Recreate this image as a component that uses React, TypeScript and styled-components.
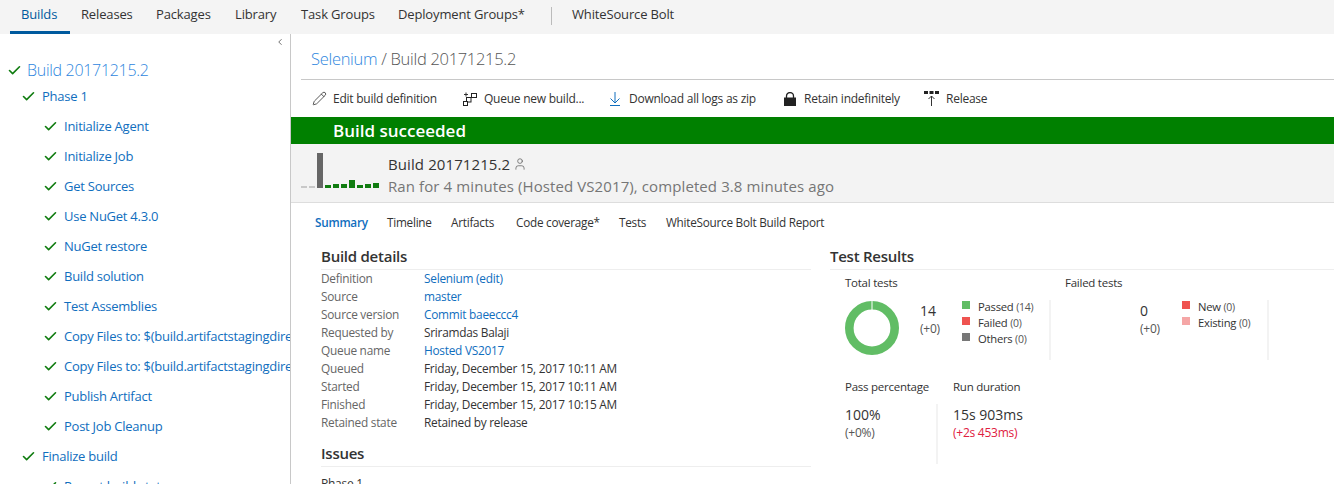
import React from "react";
import styled, { createGlobalStyle } from "styled-components";
import { Pencil, User, Check, ChevronLeft } from "lucide-react";

const Global = createGlobalStyle`
  html, body { margin: 0; padding: 0; background: #fff; height: 484px; overflow: hidden; }
  body { font-family: "Open Sans", "Noto Sans", "Liberation Sans", sans-serif; font-size: 12px; color: #333; letter-spacing: -0.25px; }
  #root { height: 484px; overflow: hidden; }
`;

const Page = styled.div`display: flex; flex-direction: column; width: 1334px; height: 484px; overflow: hidden;`;
const TopBar = styled.nav`display: flex; align-items: stretch; height: 34px; flex: none; background: #f4f4f4; padding-left: 10px; font-size: 13px; letter-spacing: -0.15px;`;
const TopTab = styled.div<{ $w: number; $active?: boolean; $flush?: boolean }>`
  width: ${p => p.$w}px; box-sizing: border-box; padding-left: ${p => (p.$flush ? 0 : 11)}px; line-height: 29px; white-space: nowrap;
  color: ${p => (p.$active ? "#005a9e" : "#333")};
  border-bottom: 3px solid ${p => (p.$active ? "#005a9e" : "transparent")};
`;
const TopSep = styled.div`width: 1px; height: 18px; margin: 7px 20px 0 0; background: #bbb;`;
const Body = styled.div`display: flex; flex: 1; min-height: 0;`;
const Side = styled.aside`width: 291px; flex: none; box-sizing: border-box; border-right: 1px solid #c8c8c8; position: relative; overflow: hidden; padding-top: 23px;`;
const Collapse = styled.div`position: absolute; top: 3px; right: 5px; color: #555; display: flex;`;
const Row = styled.div<{ $level: number }>`
  display: flex; align-items: center; white-space: nowrap; overflow: hidden; height: 30px; box-sizing: border-box;
  padding-left: ${p => [7, 21, 43][p.$level]}px; color: #106ebe; font-size: 13px;
`;
const TitleRow = styled(Row)`font-size: 16px; height: 28px; color: #2e86de; font-weight: 300; letter-spacing: -0.3px; padding-bottom: 2px;`;
const PhaseRow = styled(Row)`height: 22px; margin-bottom: 4px;`;
const Tick = styled(Check)<{ $gap: number }>`flex: none; margin-right: ${p => p.$gap}px; color: #107c10;`;
const Main = styled.main`flex: 1; min-width: 0; display: flex; flex-direction: column; overflow: hidden;`;
const Crumb = styled.div`margin: 0 0 0 10px; height: 46px; box-sizing: border-box; padding: 13px 0 0 10px; border-bottom: 1px solid #c8c8c8; font-size: 16.5px; line-height: 24px; color: #555; font-weight: 300; letter-spacing: -0.3px;`;
const CrumbLink = styled.span`color: #2e86de;`;
const Tools = styled.div`display: flex; height: 37px; align-items: center; padding-left: 21px; font-size: 12px; flex: none;`;
const Tool = styled.div<{ $w: number; $gap?: number }>`width: ${p => p.$w}px; display: flex; align-items: center; gap: ${p => p.$gap ?? 7}px; white-space: nowrap; flex: none;`;
const Banner = styled.div`height: 27px; line-height: 28px; flex: none; background: #008000; color: #fff; font-weight: 600; font-size: 17px; letter-spacing: 0; padding-left: 42px;`;
const Summary = styled.div`height: 59px; flex: none; display: flex; background: #f3f3f3; border-bottom: 1px solid #ddd; box-sizing: border-box; padding-left: 10px;`;
const Spark = styled.div`display: flex; align-items: flex-end; gap: 2px; width: 87px; height: 44px; flex: none;`;
const Bar = styled.div<{ $h: number; $c: string }>`width: 6px; height: ${p => p.$h}px; background: ${p => p.$c};`;
const SumText = styled.div`font-size: 15px; line-height: 22px; padding-top: 9px; white-space: nowrap; letter-spacing: 0.1px;`;
const SumTitle = styled.div`color: #333; display: flex; align-items: center; gap: 3px;`;
const SumSub = styled.div`color: #767676;`;
const SubTabs = styled.div`display: flex; height: 38px; align-items: center; padding-left: 24px; font-size: 11.75px; flex: none;`;
const SubTab = styled.div<{ $w: number; $active?: boolean }>`width: ${p => p.$w}px; flex: none; white-space: nowrap; color: ${p => (p.$active ? "#106ebe" : "#333")}; font-weight: ${p => (p.$active ? 600 : 400)};`;
const Columns = styled.div`display: flex; flex: 1; padding-left: 30px; min-height: 0;`;
const Left = styled.section`width: 490px; margin-right: 19px; flex: none;`;
const Right = styled.section`flex: 1; min-width: 0;`;
const Heading = styled.h2`margin: 0; font-size: 15px; line-height: 22px; font-weight: 600; color: #333; border-bottom: 1px solid #eee; box-sizing: border-box; padding-top: 4px; height: 29px;`;
const IssuesHeading = styled(Heading)`margin-top: 11px; height: 25px; padding-top: 0;`;
const DetailGrid = styled.dl`display: grid; grid-template-columns: 103px 1fr; grid-auto-rows: 18px; margin: -1px 0 0; line-height: 18px; font-size: 11.85px;`;
const Term = styled.dt`color: #666;`;
const Def = styled.dd<{ $link?: boolean }>`margin: 0; color: ${p => (p.$link ? "#106ebe" : "#333")};`;
const PhaseLine = styled.div`margin-top: 8px; font-size: 12px; line-height: 18px;`;
const Stats = styled.div`display: flex; padding-left: 15px;`;
const StatTitle = styled.div`font-size: 11.5px; line-height: 18px; height: 26px; margin-top: 4px; color: #333;`;
const Metric = styled.div<{ $w: number; $after?: number }>`
  width: ${p => p.$w}px; margin-right: ${p => p.$after ?? 0}px; flex: none; box-sizing: border-box; white-space: nowrap;
`;
const MetricBody = styled.div<{ $indent?: number }>`
  display: flex; height: 60px; padding-left: ${p => p.$indent ?? 0}px; box-sizing: border-box;
  border-right: 2px solid #f3f3f3;
`;
const Donut = styled.svg`flex: none; margin-top: 1px;`;
const Count = styled.div<{ $ml: number }>`width: 42px; margin-left: ${p => p.$ml}px; flex: none; color: #333;`;
const Big = styled.div`font-size: 14px; line-height: 20px; font-weight: 500; padding-top: 1px; letter-spacing: 0;`;
const Small = styled.div<{ $red?: boolean }>`font-size: 12px; line-height: 16px; color: ${p => (p.$red ? "#e02040" : "#555")};`;
const Legend = styled.div`font-size: 11.25px; display: flex; flex-direction: column; margin-top: -2px;`;
const LegendRow = styled.div`display: flex; align-items: center; height: 16px; gap: 8px; white-space: nowrap; color: #333;`;
const Swatch = styled.div<{ $c: string }>`width: 8px; height: 8px; margin-top: -3px; background: ${p => p.$c};`;
const Paren = styled.span`font-size: 10.5px; color: #555;`;
const Lower = styled(Stats)`margin-top: 18px;`;
const LowerTitle = styled(StatTitle)`margin-top: 0;`;
const LowerBody = styled.div<{ $sep?: boolean }>`height: 60px; box-sizing: border-box; border-right: ${p => (p.$sep ? "2px solid #f3f3f3" : "none")};`;

const steps = ["Initialize Agent", "Initialize Job", "Get Sources", "Use NuGet 4.3.0", "NuGet restore", "Build solution", "Test Assemblies", "Copy Files to: $(build.artifactstagingdirectory)", "Copy Files to: $(build.artifactstagingdirectory)", "Publish Artifact", "Post Job Cleanup"];
const tabs: [string, number][] = [["Builds", 60], ["Releases", 75], ["Packages", 79], ["Library", 66], ["Task Groups", 97], ["Deployment Groups*", 164]];
const subTabs: [string, number][] = [["Summary", 72], ["Timeline", 64], ["Artifacts", 65], ["Code coverage*", 103], ["Tests", 47], ["WhiteSource Bolt Build Report", 200]];
const bars: [number, string][] = [[2, "#c8c8c8"], [2, "#c8c8c8"], [35, "#666"], [3, "#107c10"], [4, "#107c10"], [4, "#107c10"], [8, "#107c10"], [3, "#107c10"], [4, "#107c10"], [5, "#107c10"]];
const details: [string, string, boolean][] = [
  ["Definition", "Selenium (edit)", true], ["Source", "master", true], ["Source version", "Commit baeeccc4", true],
  ["Requested by", "Sriramdas Balaji", false], ["Queue name", "Hosted VS2017", true],
  ["Queued", "Friday, December 15, 2017 10:11 AM", false], ["Started", "Friday, December 15, 2017 10:11 AM", false],
  ["Finished", "Friday, December 15, 2017 10:15 AM", false], ["Retained state", "Retained by release", false],
];

const QueueIcon = () => (
  <svg width="14" height="14" viewBox="0 0 14 14" fill="none" stroke="#222" strokeWidth="1">
    <rect x="3.5" y="5.5" width="4.5" height="4.5" />
    <rect x="0.5" y="9.5" width="4" height="4" fill="#fff" />
    <rect x="8.5" y="1.5" width="5" height="4" />
    <path d="M1 2.5h4M3 0.500v4" stroke="#333" />
  </svg>
);
const DownloadIcon = () => (
  <svg width="14" height="14" viewBox="0 0 14 14" fill="none" stroke="#106ebe" strokeWidth="1">
    <path d="M7 0v11M2.500 6.500L7 11l4.500-4.500M2 13.500h10" />
  </svg>
);
const LockIcon = () => (
  <svg width="14" height="14" viewBox="0 0 14 14">
    <path d="M3.500 6V4a3.500 3.500 0 0 1 7 0v2" fill="none" stroke="#222" strokeWidth="1.300" />
    <rect x="1" y="5.500" width="12" height="8.500" fill="#222" />
  </svg>
);
const ReleaseIcon = () => (
  <svg width="15" height="15" viewBox="0 0 15 15" fill="none">
    <path d="M0 0h4v3H0zM5.500 0h4v3h-4zM11 0h4v3h-4z" fill="#222" />
    <path d="M7.500 15V5M4.500 8l3-3 3 3" stroke="#333" />
  </svg>
);

export default function App() {
  return (
    <Page>
      <Global />
      <TopBar>
        {tabs.map(([t, w], i) => <TopTab key={t} $w={w} $active={i === 0}>{t}</TopTab>)}
        <TopSep />
        <TopTab $w={120} $flush>WhiteSource Bolt</TopTab>
      </TopBar>
      <Body>
        <Side>
          <Collapse><ChevronLeft size={10} strokeWidth={2} /></Collapse>
          <TitleRow $level={0}><Tick $gap={5} size={15} strokeWidth={2.6} />Build 20171215.2</TitleRow>
          <PhaseRow $level={1}><Tick $gap={6} size={15} strokeWidth={2.6} />Phase 1</PhaseRow>
          {steps.map((s, i) => <Row key={i} $level={2}><Tick $gap={6} size={15} strokeWidth={2.6} />{s}</Row>)}
          <Row $level={1}><Tick $gap={6} size={15} strokeWidth={2.6} />Finalize build</Row>
          <Row $level={2}><Tick $gap={6} size={15} strokeWidth={2.6} />Report build status</Row>
        </Side>
        <Main>
          <Crumb><CrumbLink>Selenium</CrumbLink> / Build 20171215.2</Crumb>
          <Tools>
            <Tool $w={151} $gap={6}><Pencil size={15} strokeWidth={1.3} />Edit build definition</Tool>
            <Tool $w={145}><QueueIcon />Queue new build...</Tool>
            <Tool $w={175}><DownloadIcon />Download all logs as zip</Tool>
            <Tool $w={141}><LockIcon />Retain indefinitely</Tool>
            <Tool $w={80}><ReleaseIcon />Release</Tool>
          </Tools>
          <Banner>Build succeeded</Banner>
          <Summary>
            <Spark>{bars.map(([h, c], i) => <Bar key={i} $h={h} $c={c} />)}</Spark>
            <SumText>
              <SumTitle>Build 20171215.2 <User size={14} strokeWidth={1.2} color="#555" /></SumTitle>
              <SumSub>Ran for 4 minutes (Hosted VS2017), completed 3.8 minutes ago</SumSub>
            </SumText>
          </Summary>
          <SubTabs>{subTabs.map(([t, w], i) => <SubTab key={t} $w={w} $active={i === 0}>{t}</SubTab>)}</SubTabs>
          <Columns>
            <Left>
              <Heading>Build details</Heading>
              <DetailGrid>
                {details.map(([k, v, l]) => (
                  <React.Fragment key={k}><Term>{k}</Term><Def $link={l}>{v}</Def></React.Fragment>
                ))}
              </DetailGrid>
              <IssuesHeading>Issues</IssuesHeading>
              <PhaseLine>Phase 1</PhaseLine>
            </Left>
            <Right>
              <Heading>Test Results</Heading>
              <Stats>
                <Metric $w={206} $after={14}>
                  <StatTitle>Total tests</StatTitle>
                  <MetricBody>
                    <Donut width="54" height="54" viewBox="0 0 54 54">
                      <circle cx="27" cy="27" r="22.7" fill="none" stroke="#61bd65" strokeWidth="8.6" />
                      <rect x="26.500" y="0" width="1" height="9" fill="#fff" />
                    </Donut>
                    <Count $ml={21}><Big>14</Big><Small>(+0)</Small></Count>
                    <Legend>
                      <LegendRow><Swatch $c="#61bd65" /><span>Passed <Paren>(14)</Paren></span></LegendRow>
                      <LegendRow><Swatch $c="#ef5350" /><span>Failed <Paren>(0)</Paren></span></LegendRow>
                      <LegendRow><Swatch $c="#777" /><span>Others <Paren>(0)</Paren></span></LegendRow>
                    </Legend>
                  </MetricBody>
                </Metric>
                <Metric $w={204}>
                  <StatTitle>Failed tests</StatTitle>
                  <MetricBody $indent={75}>
                    <Count $ml={0}><Big>0</Big><Small>(+0)</Small></Count>
                    <Legend>
                      <LegendRow><Swatch $c="#ef5350" /><span>New <Paren>(0)</Paren></span></LegendRow>
                      <LegendRow><Swatch $c="#f5a6a6" /><span>Existing <Paren>(0)</Paren></span></LegendRow>
                    </Legend>
                  </MetricBody>
                </Metric>
              </Stats>
              <Lower>
                <Metric $w={93} $after={15}>
                  <LowerTitle>Pass percentage</LowerTitle>
                  <LowerBody $sep><Big>100%</Big><Small>(+0%)</Small></LowerBody>
                </Metric>
                <Metric $w={120}>
                  <LowerTitle>Run duration</LowerTitle>
                  <LowerBody><Big>15s 903ms</Big><Small $red>(+2s 453ms)</Small></LowerBody>
                </Metric>
              </Lower>
            </Right>
          </Columns>
        </Main>
      </Body>
    </Page>
  );
}
